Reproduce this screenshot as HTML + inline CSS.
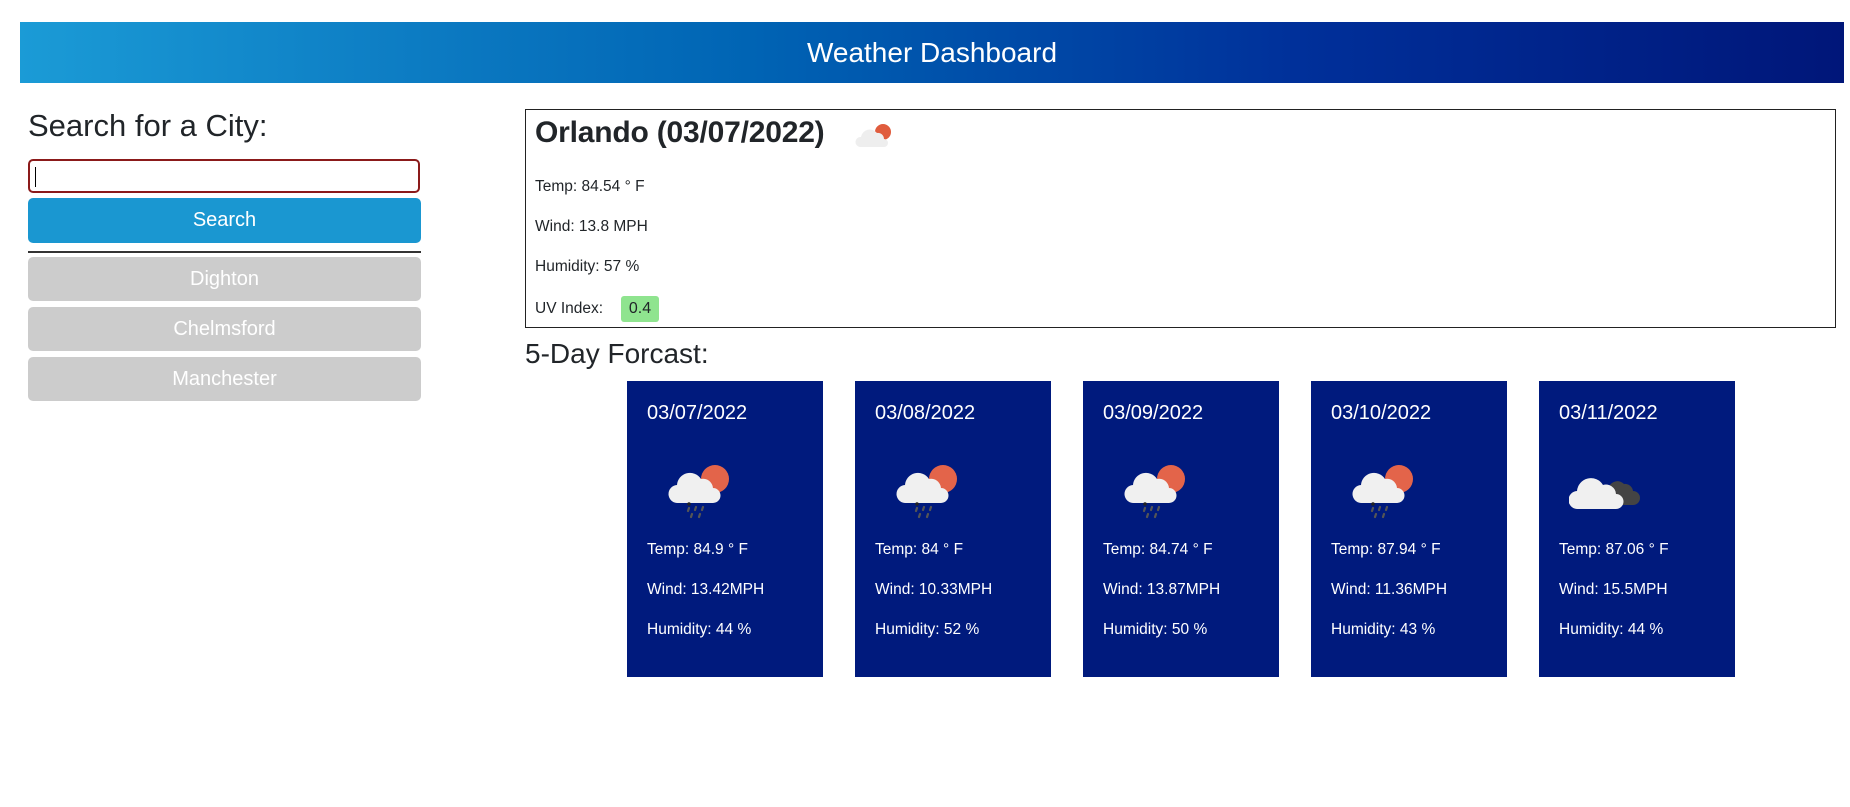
<!DOCTYPE html>
<html><head><meta charset="utf-8"><style>
*{box-sizing:border-box;margin:0;padding:0}
body{width:1850px;height:807px;background:#fff;font-family:"Liberation Sans",sans-serif;color:#212529;position:relative;overflow:hidden}
.hdr{position:absolute;left:20px;top:22px;width:1824px;height:61px;background:linear-gradient(90deg,#1b9bd6 0%,#0a77c0 25%,#0064b4 40%,#00309a 70%,#001679 100%);color:#fff;font-size:28px;text-align:center;line-height:61px}
.abs{position:absolute}
.lbl{left:28px;top:108px;font-size:31px;color:#212529}
.inp{left:28px;top:159px;width:392px;height:34px;border:2px solid #8b1a1a;border-radius:5px}
.inp::before{content:"";position:absolute;left:5px;top:6px;width:1px;height:20px;background:#000}
.btn{left:28px;width:393px;border-radius:5px;color:#fff;text-align:center;font-size:20px}
.s{top:198px;height:45px;line-height:45px;background:#1a97d1}
.hr{left:28px;top:251px;width:393px;height:2px;background:#333}
.g{background:#cccccc;height:44px;line-height:44px}
.cur{left:525px;top:109px;width:1311px;height:219px;border:1px solid #222}
.cur h2{position:absolute;left:9px;top:6px;font-size:30px;font-weight:bold;color:#212529;letter-spacing:-0.2px}
.cur p{position:absolute;left:9px;font-size:15.5px}
.uv{position:absolute;left:95px;top:186px;width:38px;height:26px;background:#8fe48f;border-radius:3px;text-align:center;line-height:26px;font-size:16px}
.fc{left:525px;top:338px;font-size:28px}
.card{position:absolute;top:381px;width:196px;height:296px;background:#001a7d;color:#fff}
.card .d{position:absolute;left:20px;top:21px;font-size:20px}
.card p{position:absolute;left:20px;font-size:15.5px}
.card svg{position:absolute;left:40px;top:78px}
</style></head><body>
<div class="hdr">Weather Dashboard</div>
<div class="abs lbl">Search for a City:</div>
<div class="abs inp"></div>
<div class="abs btn s">Search</div>
<div class="abs hr"></div>
<div class="abs btn g" style="top:257px">Dighton</div>
<div class="abs btn g" style="top:307px">Chelmsford</div>
<div class="abs btn g" style="top:357px">Manchester</div>

<div class="abs cur">
<h2>Orlando (03/07/2022)</h2>
<svg style="position:absolute;left:328px;top:10px" width="40" height="30" viewBox="0 0 40 30"><circle cx="29" cy="12" r="8" fill="#e05c3d"/><path d="M6 27 a5 5 0 0 1 1-10 a9 9 0 0 1 16-4 a6 6 0 0 1 7 6 a4 4 0 0 1 0 8 z" fill="#eeeeee"/></svg>
<p style="top:68px">Temp: 84.54 ° F</p>
<p style="top:108px">Wind: 13.8 MPH</p>
<p style="top:148px">Humidity: 57 %</p>
<p style="top:190px">UV Index:</p>
<div class="uv">0.4</div>
</div>

<div class="abs fc">5-Day Forcast:</div>

<svg width="0" height="0" style="position:absolute"><defs>
<g id="rain"><circle cx="48" cy="20" r="14" fill="#e3644a"/><path d="M11 44 a9 9 0 0 1 -1-18 a13 13 0 0 1 24-6 a10 10 0 0 1 12 9 a7.5 7.5 0 0 1 0 15 z" fill="#f0f0f0"/><g stroke="#555" stroke-width="2.2" stroke-linecap="round"><path d="M22 49 l-1 3M29 48 l-1 3M36 48l-1 3M25 55l-1 3M33 55l-1 3"/></g><circle cx="22" cy="45" r="1.8" fill="#222"/></g>
<g id="cloud"><path d="M40 28 a9 9 0 0 1 15-3 a8 8 0 0 1 9 7 a7 7 0 0 1 0 14 h-18z" fill="#444"/><path d="M9 50 a9 9 0 0 1 -1-18 a14 14 0 0 1 26-6 a10 10 0 0 1 13 9 a7.5 7.5 0 0 1 0 15 z" fill="#f0f0f0"/></g>
</defs></svg>

<div class="card" style="left:627px"><div class="d">03/07/2022</div><svg width="70" height="70"><use href="#rain"/></svg><p style="top:160px">Temp: 84.9 ° F</p><p style="top:200px">Wind: 13.42MPH</p><p style="top:240px">Humidity: 44 %</p></div>
<div class="card" style="left:855px"><div class="d">03/08/2022</div><svg width="70" height="70"><use href="#rain"/></svg><p style="top:160px">Temp: 84 ° F</p><p style="top:200px">Wind: 10.33MPH</p><p style="top:240px">Humidity: 52 %</p></div>
<div class="card" style="left:1083px"><div class="d">03/09/2022</div><svg width="70" height="70"><use href="#rain"/></svg><p style="top:160px">Temp: 84.74 ° F</p><p style="top:200px">Wind: 13.87MPH</p><p style="top:240px">Humidity: 50 %</p></div>
<div class="card" style="left:1311px"><div class="d">03/10/2022</div><svg width="70" height="70"><use href="#rain"/></svg><p style="top:160px">Temp: 87.94 ° F</p><p style="top:200px">Wind: 11.36MPH</p><p style="top:240px">Humidity: 43 %</p></div>
<div class="card" style="left:1539px"><div class="d">03/11/2022</div><svg width="75" height="70" style="left:30px"><use href="#cloud"/></svg><p style="top:160px">Temp: 87.06 ° F</p><p style="top:200px">Wind: 15.5MPH</p><p style="top:240px">Humidity: 44 %</p></div>
</body></html>
